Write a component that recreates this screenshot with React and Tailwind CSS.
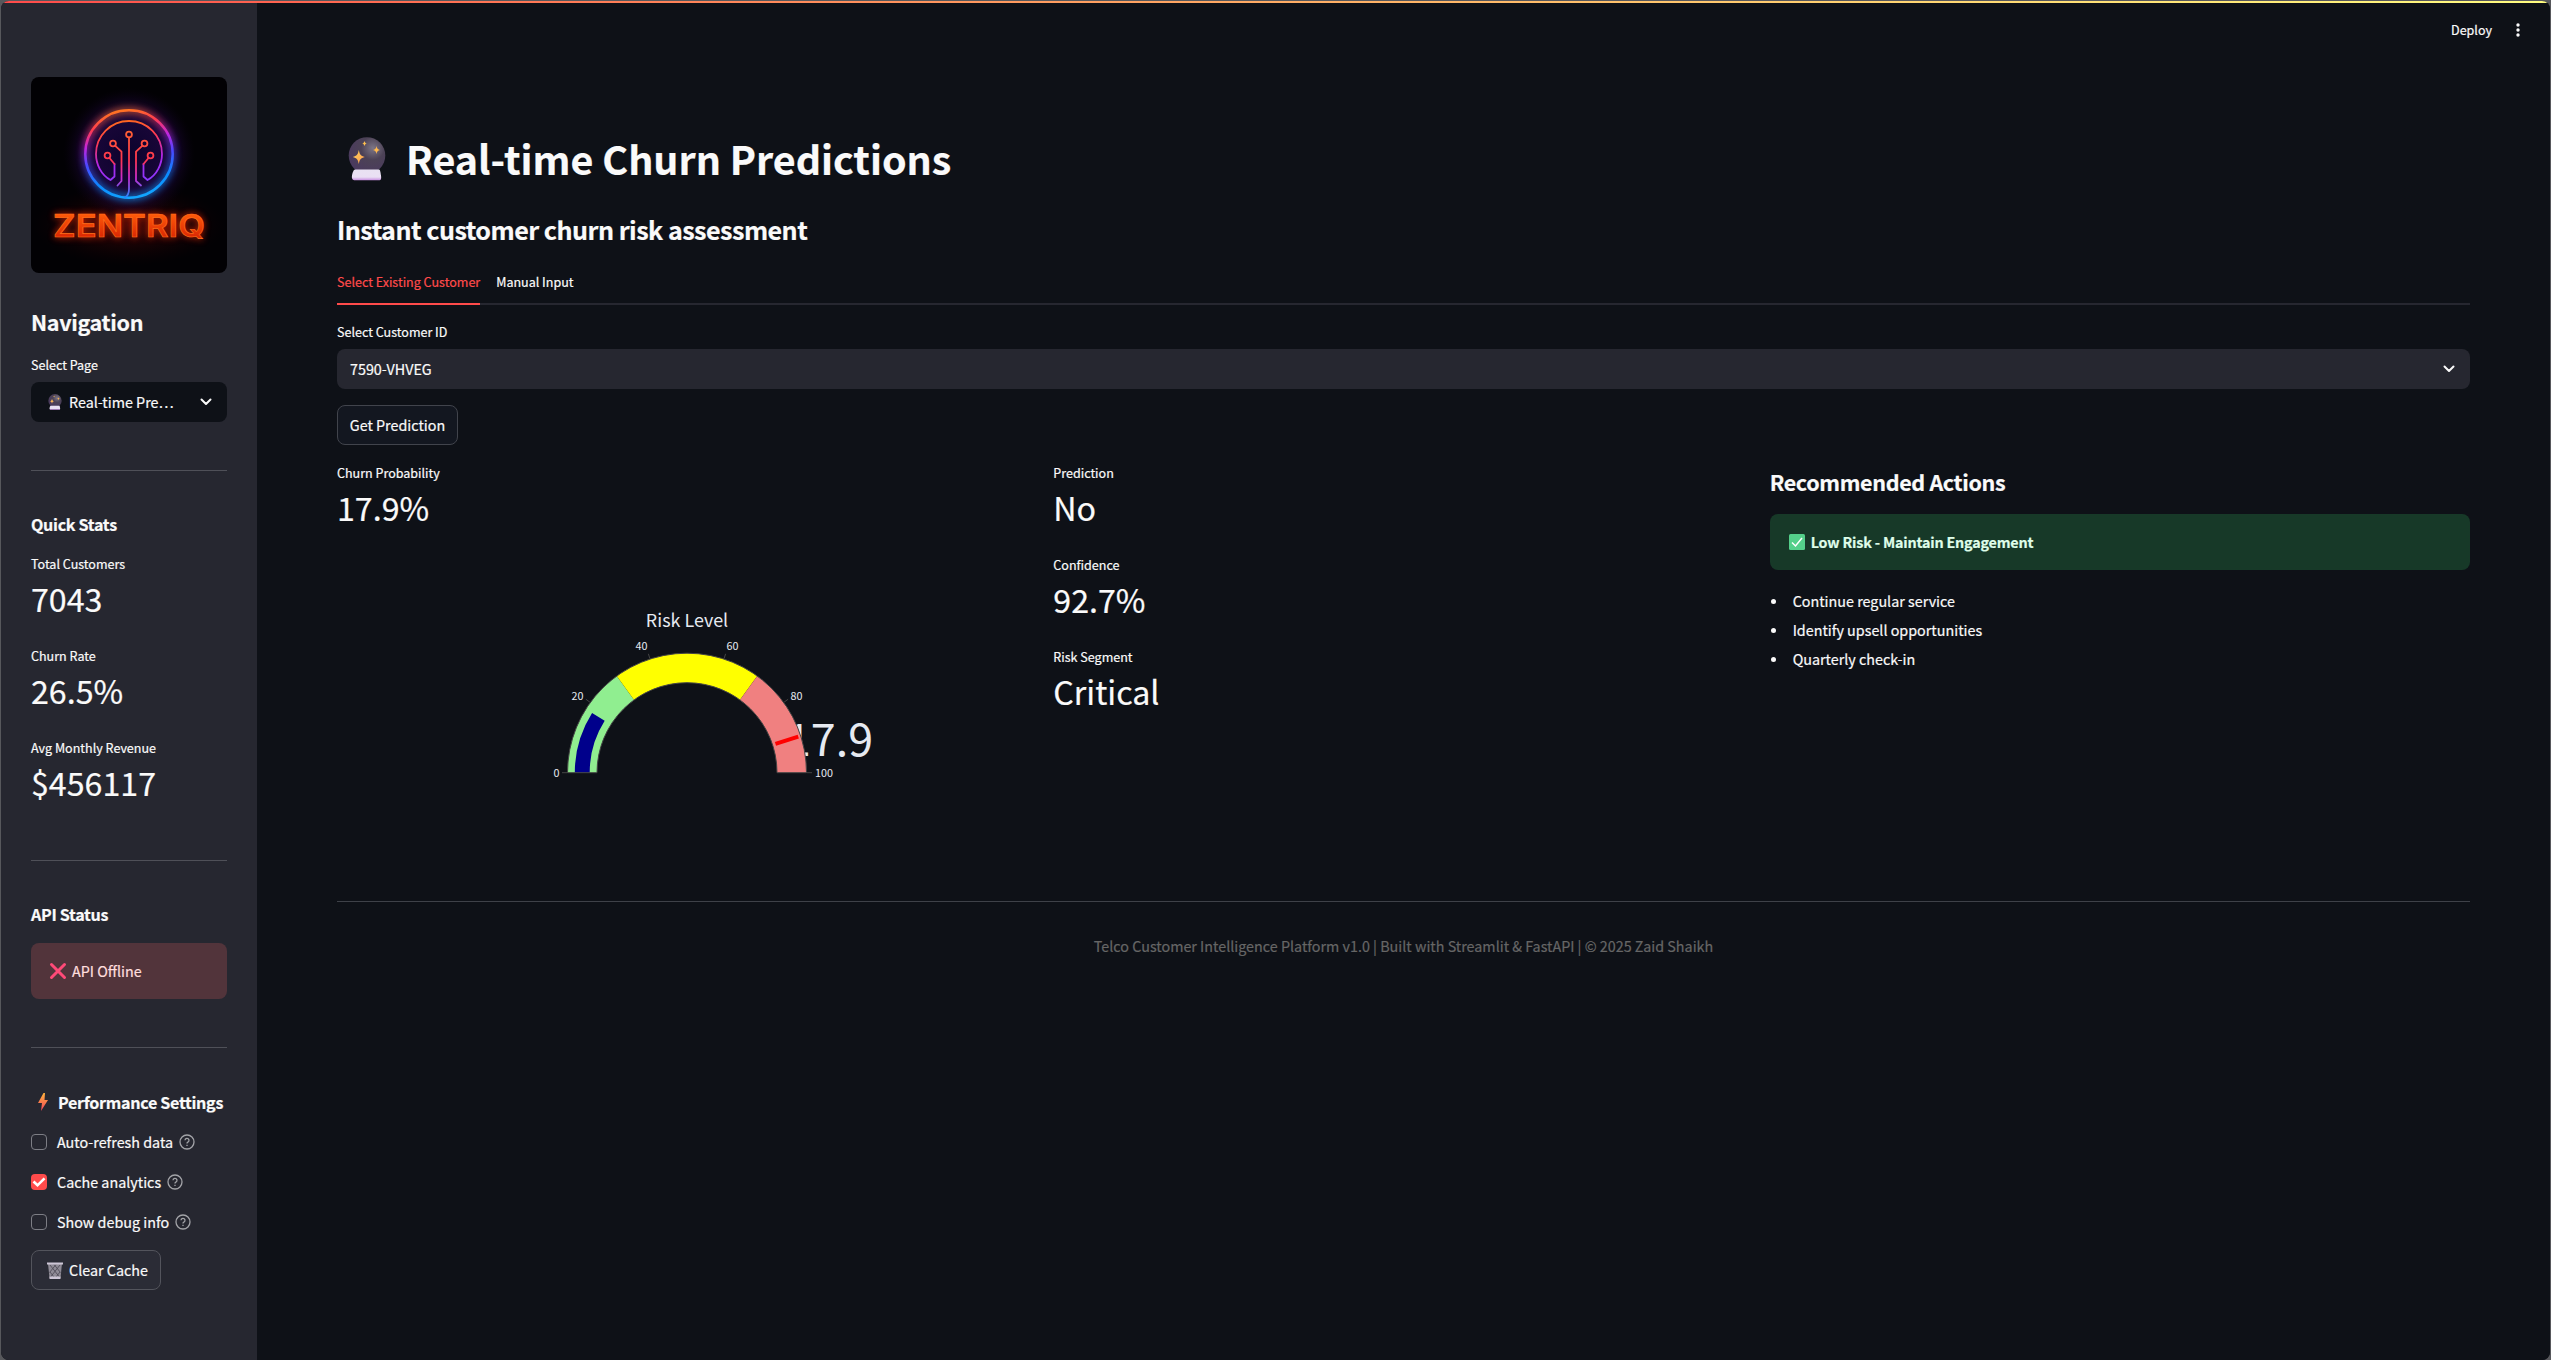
import React from "react";

function CrystalBall({ className }) {
  return (
    <svg viewBox="0 0 38 44" className={className}>
      <defs>
        <radialGradient id="ball" cx="0.66" cy="0.3" r="0.8">
          <stop offset="0" stopColor="#7d7686" />
          <stop offset="0.4" stopColor="#4c4256" />
          <stop offset="1" stopColor="#4a3860" />
        </radialGradient>
        <linearGradient id="base" x1="0" y1="0" x2="0" y2="1">
          <stop offset="0" stopColor="#e9e2f2" />
          <stop offset="0.7" stopColor="#eadff4" />
          <stop offset="1" stopColor="#c78ee0" />
        </linearGradient>
        <linearGradient id="spark" x1="0" y1="0" x2="1" y2="1">
          <stop offset="0" stopColor="#ffd45c" />
          <stop offset="1" stopColor="#ff9a50" />
        </linearGradient>
      </defs>
      <circle cx="19" cy="18.5" r="18.3" fill="url(#ball)" />
      <path d="M7 32.500h24c1.200 0 1.600 3 2 6 .500 3.500 0 4.800-2 4.800H7c-2 0-3.600-1.300-3-4.800.500-3 1.800-6 3-6z" fill="url(#base)" />
      <path d="M10.800 13c1 4.600 1.800 5.900 6 7-4.200 1.100-5 2.400-6 7-1-4.600-1.800-5.900-6-7 4.200-1.100 5-2.400 6-7z" fill="url(#spark)" />
      <path d="M28.500 9c.600 2.700 1.200 3.400 3.500 4-2.300.600-2.900 1.300-3.500 4-.600-2.700-1.200-3.400-3.500-4 2.300-.600 2.900-1.300 3.500-4z" fill="#ffb84e" />
      <path d="M16.500 4c.500 1.800.900 2.200 2.400 2.600-1.500.400-1.900.900-2.400 2.600-.500-1.700-.900-2.200-2.400-2.600 1.500-.400 1.900-.800 2.400-2.600z" fill="#ffc04e" />
    </svg>
  );
}

function Logo() {
  return (
    <svg viewBox="0 0 196 196" className="block h-[196px] w-[196px] rounded-lg bg-[#020104]">
      <defs>
        <linearGradient id="ring" gradientUnits="userSpaceOnUse" x1="88" y1="32" x2="104" y2="122">
          <stop offset="0" stopColor="#ff7a1c" />
          <stop offset="0.18" stopColor="#ff3a50" />
          <stop offset="0.36" stopColor="#c026e0" />
          <stop offset="0.55" stopColor="#4a48ff" />
          <stop offset="0.8" stopColor="#0a8cff" />
          <stop offset="1" stopColor="#12a8ff" />
        </linearGradient>
        <linearGradient id="inner" gradientUnits="userSpaceOnUse" x1="90" y1="43" x2="100" y2="106">
          <stop offset="0" stopColor="#ff6a1c" />
          <stop offset="0.3" stopColor="#ff3a50" />
          <stop offset="0.65" stopColor="#b026e8" />
          <stop offset="1" stopColor="#8a38ff" />
        </linearGradient>
        <linearGradient id="trace" gradientUnits="userSpaceOnUse" x1="0" y1="52" x2="0" y2="122">
          <stop offset="0" stopColor="#ff6430" />
          <stop offset="0.45" stopColor="#ff3450" />
          <stop offset="0.7" stopColor="#c82bd0" />
          <stop offset="1" stopColor="#1a8cff" />
        </linearGradient>
        <linearGradient id="word" x1="0" y1="0" x2="0" y2="1">
          <stop offset="0.2" stopColor="#ff5a0a" />
          <stop offset="0.8" stopColor="#dc2a04" />
        </linearGradient>
        <radialGradient id="haze" cx="98" cy="148" r="96" gradientUnits="userSpaceOnUse" gradientTransform="matrix(1 0 0 .42 0 86)">
          <stop offset="0" stopColor="#6a0a06" stopOpacity="0.6" />
          <stop offset="1" stopColor="#200004" stopOpacity="0" />
        </radialGradient>
        <radialGradient id="halo" cx="98" cy="77" r="66" gradientUnits="userSpaceOnUse">
          <stop offset="0" stopColor="#120448" stopOpacity="0.6" />
          <stop offset="0.65" stopColor="#2a0a58" stopOpacity="0.65" />
          <stop offset="1" stopColor="#10021c" stopOpacity="0" />
        </radialGradient>
        <filter id="glow" x="-40%" y="-40%" width="180%" height="180%">
          <feGaussianBlur stdDeviation="3.5" />
        </filter>
      </defs>
      <rect width="196" height="196" fill="url(#haze)" />
      <rect width="196" height="196" fill="url(#halo)" />
      <circle cx="98" cy="77" r="43.5" fill="none" stroke="url(#ring)" strokeWidth="5" filter="url(#glow)" opacity="0.75" />
      <circle cx="98" cy="77" r="43.7" fill="none" stroke="url(#ring)" strokeWidth="2.5" />
      <g fill="none" strokeWidth="1.8" strokeLinejoin="round" strokeLinecap="round">
        <path stroke="url(#inner)" d="M83.500 87v12.500L79.500 103C70 98 65 87 65 77a33 33 0 0 1 66 0c0 10-5 21-14.500 26L112.500 99.500V87" />
        <g stroke="url(#trace)">
          <circle cx="98" cy="57.500" r="2.900" />
          <circle cx="82" cy="66.500" r="2.900" />
          <circle cx="113.500" cy="66.500" r="2.900" />
          <circle cx="76.500" cy="78.500" r="2.900" />
          <circle cx="119.500" cy="78.500" r="2.900" />
          <path d="M98.010 60.500 98 112q0 6-4 8.500" />
          <path d="M84 68.700l6.500 6V104l-4 4.500" />
          <path d="M111.500 68.700l-6.500 6V104l5 4.500" />
          <path d="M78.500 81l5 6" />
          <path d="M117.500 81l-5 6" />
        </g>
      </g>
      <g fontFamily="Inter, sans-serif" fontWeight="600" fontSize="31">
        <text x="22" y="159.500" textLength="152" lengthAdjust="spacingAndGlyphs" fill="#ff2a00" stroke="#ff2a00" strokeWidth="1.5" filter="url(#glow)" opacity="0.65">ZENTRIQ</text>
        <text x="22" y="159.500" textLength="152" lengthAdjust="spacingAndGlyphs" fill="url(#word)" stroke="#ff701a" strokeWidth="0.6">ZENTRIQ</text>
      </g>
    </svg>
  );
}

function Chevron() {
  return (
    <svg viewBox="0 0 12 8" className="h-2 w-3 shrink-0" fill="none" stroke="#fafafa" strokeWidth="2">
      <path d="M1.500 1.500 6 6l4.500-4.500" strokeLinejoin="round" strokeLinecap="round" />
    </svg>
  );
}

function Metric({ label, value }) {
  return (
    <div className="h-[92px]">
      <div className="h-[22px] text-[12.54px] leading-6">{label}</div>
      <div className="h-12 text-[32.2px] leading-[48px]">{value}</div>
    </div>
  );
}

function Check({ label, checked }) {
  return (
    <div className="flex h-10 items-start">
      {checked ? (
        <span className="flex h-4 w-4 items-center justify-center rounded bg-[#ff4b4b]">
          <svg viewBox="0 0 16 16" className="h-4 w-4" fill="none" stroke="#fff" strokeWidth="2.6">
            <path d="M2.500 7.500l4 3.800 7-7" />
          </svg>
        </span>
      ) : (
        <span className="h-4 w-4 rounded border border-[#7d7e85]" />
      )}
      <span className="-mt-1 ml-2.5 text-[14.33px] leading-6">{label}</span>
      <svg viewBox="0 0 16 16" className="ml-1.5 h-4 w-4" fill="none" stroke="#a3a4a8" strokeWidth="1.3">
        <circle cx="8" cy="8" r="7" />
        <path d="M6 6.300a2 2 0 1 1 2.900 1.800c-.6.300-.9.600-.9 1.300" />
        <path d="M8 10.800v1.200" />
      </svg>
    </div>
  );
}

// Point on the dial at radius r for a value between 0 and 100.
function polar(r, pct) {
  const a = Math.PI * (1 - pct / 100);
  return [157 + r * Math.cos(a), 182.7 - r * Math.sin(a)];
}

function band(r1, r2, from, to) {
  const [a, b] = polar(r2, from);
  const [c, d] = polar(r2, to);
  const [e, f] = polar(r1, to);
  const [g, h] = polar(r1, from);
  return `M${a} ${b}A${r2} ${r2} 0 0 1 ${c} ${d}L${e} ${f}A${r1} ${r1} 0 0 0 ${g} ${h}Z`;
}

function Gauge() {
  const ticks = [
    [0, 26.5, 187],
    [20, 47.5, 110],
    [40, 111.5, 60],
    [60, 202.5, 60],
    [80, 266.5, 110],
    [100, 294, 187],
  ];
  const [tx1, ty1] = polar(93, 90);
  const [tx2, ty2] = polar(117, 90);
  return (
    <svg viewBox="0 0 380 220" className="ml-[193px] block h-[220px] w-[380px]" fontFamily='"Noto Sans CJK SC", sans-serif' fill="#e6eaf1">
      <text x="157" y="37" fontSize="17.9" textAnchor="middle">Risk Level</text>
      <text x="299.5" y="165.7" fontSize="44.8" textAnchor="middle">17.9</text>
      {ticks.map(([v, x, y]) => {
        const [x1, y1] = polar(120, v);
        const [x2, y2] = polar(125, v);
        return (
          <g key={v}>
            <path d={`M${x1} ${y1}L${x2} ${y2}`} stroke="#444" />
            <text x={x} y={y} fontSize="10.75" textAnchor="middle">{v}</text>
          </g>
        );
      })}
      <path d={band(90, 119.5, 0, 30)} fill="#90ee90" />
      <path d={band(90, 119.5, 30, 70)} fill="#ffff00" />
      <path d={band(90, 119.5, 70, 100)} fill="#f08080" />
      <path d={band(97.3, 112.2, 0, 17.9)} fill="#00008b" />
      <path d={`M${tx1} ${ty1}L${tx2} ${ty2}`} stroke="#f00" strokeWidth="4" />
      <path d={band(90, 119.5, 0, 100)} fill="none" stroke="#444" />
    </svg>
  );
}

function Sidebar() {
  return (
    <aside className="w-[256px] shrink-0 bg-[#262730] px-[30px] pt-[74px]">
      <Logo />
      <h2 className="mt-[31px] h-9 text-[21.5px] font-bold leading-9 tracking-[-0.3px]">Navigation</h2>
      <div className="mt-[13px] h-6 text-[12.54px] leading-6">Select Page</div>
      <div className="mt-[5px] flex h-10 items-center rounded-lg bg-[#0e1117] pl-[17px] pr-[15px]">
        <CrystalBall className="h-4 w-3.5 shrink-0" />
        <span className="ml-[7px] flex-1 whitespace-nowrap text-[14.33px] leading-6">Real-time Pre…</span>
        <Chevron />
      </div>
      <div className="mt-12 h-px bg-[#4f5058]" />
      <h3 className="mt-[37px] h-8 text-[16.1px] font-bold leading-8 tracking-[-0.3px]">Quick Stats</h3>
      <div className="mt-3">
        <Metric label="Total Customers" value="7043" />
        <Metric label="Churn Rate" value="26.5%" />
        <Metric label="Avg Monthly Revenue" value="$456117" />
      </div>
      <div className="mt-8 h-px bg-[#4f5058]" />
      <h3 className="mt-[37px] h-8 text-[16.1px] font-bold leading-8 tracking-[-0.3px]">API Status</h3>
      <div className="mt-[13px] flex h-14 items-center rounded-lg bg-[#52343b] pl-[18px] text-[14.33px] text-[#ffdede]">
        <svg viewBox="0 0 18 18" className="h-[18px] w-[18px]" stroke="#ff4a78" strokeWidth="3" strokeLinecap="round">
          <path d="M2.500 2.500l13 13M15.500 2.500l-13 13" />
        </svg>
        <span className="ml-[5px]">API Offline</span>
      </div>
      <div className="mt-12 h-px bg-[#4f5058]" />
      <h3 className="mt-[38px] flex h-8 items-center text-[16.1px] font-bold leading-8 tracking-[-0.3px]">
        <svg viewBox="0 0 10 18" className="ml-[7px] h-[18px] w-2.5 shrink-0">
          <defs>
            <linearGradient id="bolt" x1="0" y1="0" x2="0" y2="1">
              <stop offset="0" stopColor="#ffb43c" />
              <stop offset="1" stopColor="#f5445c" />
            </linearGradient>
          </defs>
          <path d="M5.500 0 0 10h4L3 18 10 7H6.500L7 0z" fill="url(#bolt)" />
        </svg>
        <span className="ml-2.5 whitespace-nowrap">Performance Settings</span>
      </h3>
      <div className="mt-4">
        <Check label="Auto-refresh data" />
        <Check label="Cache analytics" checked />
        <Check label="Show debug info" />
      </div>
      <div className="-mt-1 flex h-10 w-[130px] items-center rounded-lg border border-[#53545c] bg-[#2b2c36] pl-[15px] text-[14.33px]">
        <svg viewBox="0 0 16 17" className="h-[17px] w-4 shrink-0">
          <path d="M1 1.500h14L13.500 16h-11z" fill="#8f8b96" />
          <path d="M3 3l9.500 12M7 2.500l6.500 8M13 3 3.500 15M9 2.500l-6.500 8M3 10l4 5M13 10l-4 5" stroke="#4a4653" strokeWidth="0.8" />
          <path d="M0 0.500h16v2H0zM2.500 14.500h11V17h-11z" fill="#cdc6d6" />
        </svg>
        <span className="ml-1.5 whitespace-nowrap">Clear Cache</span>
      </div>
    </aside>
  );
}

function Main() {
  return (
    <main className="min-w-0 flex-1 bg-[#0e1117] px-20">
      <header className="-mr-20 flex h-[54px] items-center justify-end pr-[30px] text-[12.54px]">
        <span>Deploy</span>
        <svg viewBox="0 0 4 14" className="ml-6 h-3.5 w-1" fill="#fafafa">
          <circle cx="2" cy="2" r="1.7" />
          <circle cx="2" cy="7" r="1.7" />
          <circle cx="2" cy="12" r="1.7" />
        </svg>
      </header>
      <h1 className="mt-[71px] flex h-[60px] items-center text-[39.4px] font-bold leading-[60px]">
        <CrystalBall className="ml-[11px] mt-0.5 h-11 w-[38px]" />
        <span className="ml-5">Real-time Churn Predictions</span>
      </h1>
      <h3 className="mt-[21px] h-10 text-[25.1px] font-bold leading-10 tracking-[-0.52px]">Instant customer churn risk assessment</h3>
      <div className="mt-3.5 flex h-[42px] gap-4 border-b-2 border-[#262730] text-[12.54px] leading-[37px]">
        <span className="-mb-0.5 h-[42px] border-b-2 border-[#ff4b4b] text-[#ff4b4b]">Select Existing Customer</span>
        <span>Manual Input</span>
      </div>
      <div className="mt-[15px] h-6 text-[12.54px] leading-6">Select Customer ID</div>
      <div className="mt-[5px] flex h-10 items-center justify-between rounded-lg bg-[#262730] pl-[13px] pr-[15px] text-[14.33px]">
        <span className="-mt-px">7590-VHVEG</span>
        <Chevron />
      </div>
      <div className="mt-4 flex h-10 w-[121px] items-center justify-center whitespace-nowrap rounded-lg border border-[#41444c] bg-[#131720] text-[14.33px]">Get Prediction</div>
      <div className="mt-4 grid h-[440px] grid-cols-3 gap-4">
        <section>
          <Metric label="Churn Probability" value="17.9%" />
          <div className="mt-[37px]"><Gauge /></div>
        </section>
        <section>
          <Metric label="Prediction" value="No" />
          <Metric label="Confidence" value="92.7%" />
          <Metric label="Risk Segment" value="Critical" />
        </section>
        <section>
          <h3 className="mt-[3px] h-9 text-[21.5px] font-bold leading-9 tracking-[-0.34px]">Recommended Actions</h3>
          <div className="mt-3.5 flex h-14 items-center rounded-lg bg-[#173928] pl-[19px] text-[14.33px] font-bold tracking-[-0.18px] text-[#dffde9]">
            <svg viewBox="0 0 16 16" className="h-4 w-4">
              <rect width="16" height="16" rx="1.5" fill="#54d08a" />
              <path d="M3 8.500l3.500 3.500L13 4" fill="none" stroke="#fff" strokeWidth="1.5" />
            </svg>
            <span className="-mt-px ml-1.5">Low Risk - Maintain Engagement</span>
          </div>
          <ul className="mt-4 text-[14.33px] leading-[29px]">
            {["Continue regular service", "Identify upsell opportunities", "Quarterly check-in"].map((t) => (
              <li key={t} className="flex h-[29px] items-center">
                <span className="ml-px mr-[17px] mt-0.5 h-[5px] w-[5px] rounded-full bg-[#fafafa]" />
                {t}
              </li>
            ))}
          </ul>
        </section>
      </div>
      <div className="h-px bg-[#3e4148]" />
      <footer className="mt-8 h-6 text-center text-[14.33px] leading-6 text-[#666]">
        Telco Customer Intelligence Platform v1.0 | Built with Streamlit &amp; FastAPI | © 2025 Zaid Shaikh
      </footer>
    </main>
  );
}

export default function App() {
  return (
    <div className="h-[1360px] w-[2551px] bg-[#57585c] px-px pt-px font-['Noto_Sans_CJK_SC','Noto_Sans',sans-serif] text-[#fafafa] [-webkit-text-stroke:0.2px]">
      <div className="flex h-[1359px] flex-col overflow-hidden rounded-lg bg-[#0e1117]">
        <div className="h-0.5 shrink-0 bg-linear-to-r from-[#ff4b4b] to-[#fffd80]" />
        <div className="flex min-h-0 flex-1">
          <Sidebar />
          <Main />
        </div>
      </div>
    </div>
  );
}
